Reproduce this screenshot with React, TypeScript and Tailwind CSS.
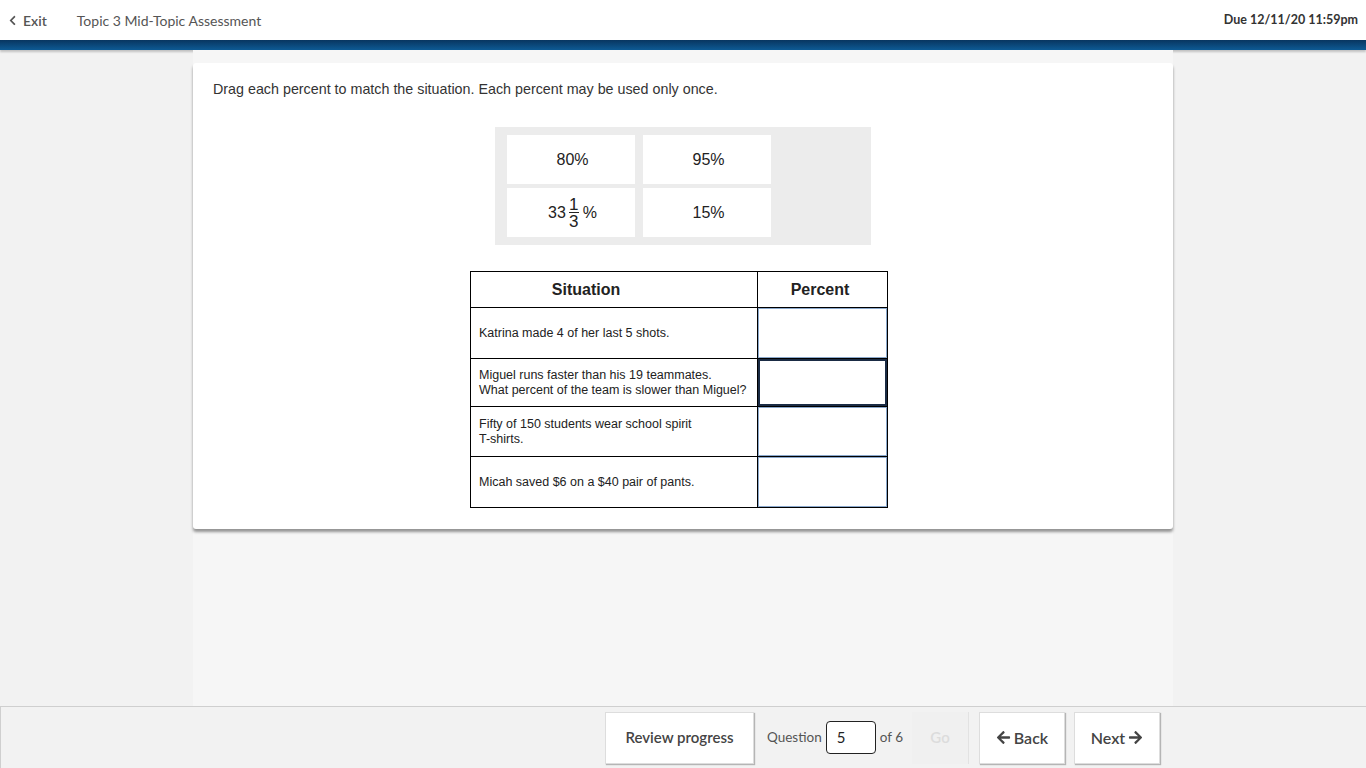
import { FaChevronLeft, FaArrowLeft, FaArrowRight } from 'react-icons/fa'

const situations = [
  ['Katrina made 4 of her last 5 shots.'],
  ['Miguel runs faster than his 19 teammates.', 'What percent of the team is slower than Miguel?'],
  ['Fifty of 150 students wear school spirit', 'T-shirts.'],
  ['Micah saved $6 on a $40 pair of pants.'],
]
const rowHeights = ['h-[51px]', 'h-[48px]', 'h-[50px]', 'h-[51px]']
const boxClasses = [
  'h-[50px] border border-[#8aa8cc]',
  'h-[47px] border-2 border-[#1a2b44]',
  'h-[49px] border border-[#8aa8cc]',
  'h-[50px] border border-[#8aa8cc]',
]

function Tile({ children }: { children: React.ReactNode }) {
  return (
    <div className="w-[128px] h-[49px] bg-white flex items-center justify-center pl-[3px] text-[16px] text-[#222]">
      {children}
    </div>
  )
}

export default function App() {
  return (
    <div className="w-[1366px] h-[768px] flex flex-col bg-[#f2f2f2] overflow-hidden font-['Lato',sans-serif]">
      {/* header */}
      <div className="h-[40px] bg-white flex items-center pl-[7px] pr-2 shrink-0">
        <FaChevronLeft className="text-[#555] text-[11px]" />
        <span className="ml-[5px] text-[14px] font-semibold text-[#555]">Exit</span>
        <span className="ml-[30px] text-[14px] text-[#555]">Topic 3 Mid-Topic Assessment</span>
        <span className="ml-auto text-[12.5px] font-bold text-[#333]">Due 12/11/20 11:59pm</span>
      </div>
      <div className="h-[10px] shrink-0 bg-gradient-to-b from-[#083660] to-[#0d5a94] shadow-[0_2px_2px_rgba(0,0,0,0.2)]" />

      {/* content */}
      <div className="flex-1 flex justify-center">
        <div className="w-[980px] h-full bg-[#f6f6f6] pt-[13px]">
          <div className="bg-white rounded-[3px] h-[466px] shadow-[0_3px_3px_rgba(0,0,0,0.4)] px-5 pt-[16px] font-['Liberation_Sans',Arial,sans-serif]">
            <p className="text-[14.3px] text-[#333]">Drag each percent to match the situation. Each percent may be used only once.</p>

            <div className="mt-[27px] ml-[282px] w-[376px] h-[118px] bg-[#ececec] pl-3 pt-2 grid grid-cols-[128px_128px] gap-x-2 gap-y-1 content-start">
              <Tile>80%</Tile>
              <Tile>95%</Tile>
              <Tile>
                <span className="flex items-center">
                  33
                  <span className="inline-flex flex-col items-center ml-[3px] mr-[4px] leading-[15px] text-[17px]">
                    <span>1</span>
                    <span className="border-t border-[#222] w-[10px]" />
                    <span className="pt-[1px]">3</span>
                  </span>
                  %
                </span>
              </Tile>
              <Tile>15%</Tile>
            </div>

            <table className="mt-[26px] ml-[257px] border-collapse text-[#222]">
              <thead>
                <tr className="h-[36px]">
                  <th className="w-[287px] border border-black text-[16px] font-bold pr-[56px]">Situation</th>
                  <th className="w-[130px] border border-black text-[16px] font-bold pr-[5px]">Percent</th>
                </tr>
              </thead>
              <tbody>
                {situations.map((lines, i) => (
                  <tr key={i} className={rowHeights[i]}>
                    <td className="border border-black px-2 text-[12.5px] leading-[15px] align-middle">
                      {lines.map((l, j) => (
                        <div key={j}>{l}</div>
                      ))}
                    </td>
                    <td className="border border-black p-0 align-top">
                      <div className={`w-full ${boxClasses[i]}`} />
                    </td>
                  </tr>
                ))}
              </tbody>
            </table>
          </div>
        </div>
      </div>

      {/* footer */}
      <div className="h-[62px] shrink-0 border-t border-l border-[#cfcfcf] bg-[#f2f2f2] flex items-center pl-[604px]">
        <button className="w-[149px] h-[52px] bg-white border border-[#ddd] shadow-[1px_1px_1px_rgba(0,0,0,0.25)] text-[15px] font-semibold text-[#444]">
          Review progress
        </button>
        <div className="w-[158px] h-[52px] flex items-center pl-[13px] text-[13.5px] text-[#555]">
          Question
          <div className="ml-[4px] w-[50px] h-[33px] border border-[#222] rounded-[4px] bg-white flex items-center pl-[10px] text-[15px] text-[#222]">
            5
          </div>
          <span className="ml-[4px]">of 6</span>
        </div>
        <button className="w-[57px] h-[52px] bg-[#f0f0f0] border-r border-[#e2e2e2] text-[15px] font-semibold text-[#dcdcdc]">
          Go
        </button>
        <button className="ml-[10px] w-[86px] h-[52px] bg-white border border-[#ddd] shadow-[1px_1px_1px_rgba(0,0,0,0.25)] text-[16px] font-semibold text-[#444] flex items-center justify-center gap-[3px]">
          <FaArrowLeft className="text-[15px]" />
          Back
        </button>
        <button className="ml-[9px] w-[86px] h-[52px] bg-white border border-[#ddd] shadow-[1px_1px_1px_rgba(0,0,0,0.25)] text-[16px] font-semibold text-[#444] flex items-center justify-center gap-[3px]">
          Next
          <FaArrowRight className="text-[15px]" />
        </button>
      </div>
    </div>
  )
}
